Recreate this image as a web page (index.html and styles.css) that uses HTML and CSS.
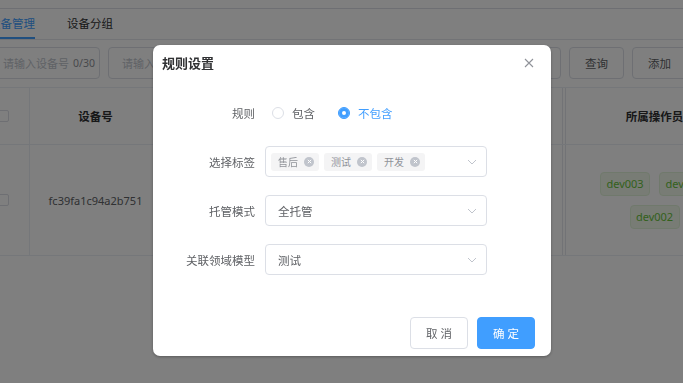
FILE: index.html
```html
<!DOCTYPE html>
<html lang="zh-CN">
<head>
  <meta charset="UTF-8">
  <meta name="viewport" content="width=device-width, initial-scale=1.0">
  <title>设备管理</title>
  <link rel="stylesheet" href="styles.css">
</head>
<body>
  <div class="page">
    <div class="topbar"></div>
    <div class="tabs">
      <div class="tab active">设备管理</div>
      <div class="tab">设备分组</div>
    </div>
    <div class="search">
      <div class="input first"><span>请输入设备号</span><span class="count">0/30</span></div>
      <div class="input second"><span>请输入</span></div>
      <div class="input third"><span>请选择</span></div>
      <button class="btn">查询</button>
      <button class="btn">添加</button>
    </div>
    <div class="table">
      <div class="row head">
        <div class="cell c-check"><span class="checkbox"></span></div>
        <div class="cell c-id">设备号</div>
        <div class="cell c-mid"></div>
        <div class="cell c-ops">所属操作员</div>
      </div>
      <div class="row body">
        <div class="cell c-check"><span class="checkbox"></span></div>
        <div class="cell c-id">fc39fa1c94a2b751</div>
        <div class="cell c-mid"></div>
        <div class="cell c-ops">
          <div class="ops">
            <span class="op">dev003</span>
            <span class="op">dev001</span>
            <span class="op">dev002</span>
          </div>
        </div>
      </div>
    </div>
  </div>

  <div class="mask">
    <div class="dialog">
      <div class="dialog-head">
        <span class="dialog-title">规则设置</span>
        <svg class="close" width="10" height="10" viewBox="0 0 10 10"><path d="M1 1l8 8M9 1l-8 8" stroke="#909399" stroke-width="1.1" fill="none"/></svg>
      </div>
      <div class="dialog-body">
        <div class="form-row">
          <label class="form-label">规则</label>
          <div class="radios">
            <span class="radio"><span class="dot"></span>包含</span>
            <span class="radio checked"><span class="dot"></span>不包含</span>
          </div>
        </div>
        <div class="form-row">
          <label class="form-label">选择标签</label>
          <div class="select">
            <div class="tags">
              <span class="tag">售后<span class="tag-x"><svg width="5" height="5" viewBox="0 0 6 6"><path d="M1 1l4 4M5 1l-4 4" stroke="#fff" stroke-width="1.2"/></svg></span></span>
              <span class="tag">测试<span class="tag-x"><svg width="5" height="5" viewBox="0 0 6 6"><path d="M1 1l4 4M5 1l-4 4" stroke="#fff" stroke-width="1.2"/></svg></span></span>
              <span class="tag">开发<span class="tag-x"><svg width="5" height="5" viewBox="0 0 6 6"><path d="M1 1l4 4M5 1l-4 4" stroke="#fff" stroke-width="1.2"/></svg></span></span>
            </div>
            <svg class="arrow" width="10" height="6" viewBox="0 0 10 6"><path d="M1 1l4 4 4-4" stroke="#c0c4cc" stroke-width="1" fill="none"/></svg>
          </div>
        </div>
        <div class="form-row">
          <label class="form-label">托管模式</label>
          <div class="select">
            <span class="value">全托管</span>
            <svg class="arrow" width="10" height="6" viewBox="0 0 10 6"><path d="M1 1l4 4 4-4" stroke="#c0c4cc" stroke-width="1" fill="none"/></svg>
          </div>
        </div>
        <div class="form-row">
          <label class="form-label">关联领域模型</label>
          <div class="select">
            <span class="value">测试</span>
            <svg class="arrow" width="10" height="6" viewBox="0 0 10 6"><path d="M1 1l4 4 4-4" stroke="#c0c4cc" stroke-width="1" fill="none"/></svg>
          </div>
        </div>
      </div>
      <div class="dialog-foot">
        <button class="dbtn">取 消</button>
        <button class="dbtn primary">确 定</button>
      </div>
    </div>
  </div>
</body>
</html>
```

FILE: styles.css
```css
html, body {
  margin: 0;
  height: 100%;
  overflow: hidden;
}
body {
  background: #fff;
  font-family: "Noto Sans", "Noto Sans CJK SC", sans-serif;
  color: #606266;
}
.page {
  margin-left: -11px;
  width: 800px;
}
.topbar {
  height: 8px;
  border-bottom: 1px solid #dcdfe6;
}
.tabs {
  display: flex;
  gap: 32px;
  height: 30px;
  border-bottom: 1px solid #e4e7ed;
}
.tab {
  font-size: 11.5px;
  line-height: 29px;
  color: #303133;
  border-bottom: 2px solid transparent;
}
.tab.active {
  color: #409eff;
  border-bottom-color: #409eff;
}
.search {
  display: flex;
  gap: 8px;
  margin-top: 7px;
  height: 32px;
}
.input {
  box-sizing: border-box;
  border: 1px solid #dcdfe6;
  border-radius: 4px;
  display: flex;
  align-items: center;
  gap: 4px;
  padding: 0 6px 0 13px;
  font-size: 11px;
  color: #c0c4cc;
  white-space: nowrap;
  overflow: hidden;
}
.input .count { color: #909399; font-size: 10.5px; }
.input.first { width: 111px; }
.input.second { width: 222px; }
.input.third { width: 223px; }
.btn {
  width: 55px;
  border: 1px solid #dcdfe6;
  border-radius: 4px;
  background: #fff;
  font: inherit;
  font-size: 11.5px;
  color: #606266;
  padding: 0;
}
.table {
  margin-top: 8px;
  border-top: 1px solid #ebeef5;
}
.row {
  display: flex;
  border-bottom: 1px solid #ebeef5;
}
.row.head { height: 56px; font-weight: 700; color: #303133; font-size: 11.5px; }
.row.body { height: 110px; font-size: 11px; }
.cell {
  display: flex;
  align-items: center;
  justify-content: center;
  border-right: 1px solid #ebeef5;
  box-sizing: border-box;
}
.c-check { width: 41px; justify-content: flex-start; padding-left: 8px; }
.c-id { width: 132px; }
.c-mid { width: 404px; border-right: 4px double #e4e7ed; }
.c-ops { width: 178px; padding: 0 12px; }
.checkbox {
  width: 12px;
  height: 12px;
  border: 1px solid #dcdfe6;
  border-radius: 2px;
  box-sizing: border-box;
}
.ops {
  display: flex;
  flex-wrap: wrap;
  justify-content: center;
  gap: 9px;
}
.op {
  font-size: 11px;
  color: #67c23a;
  background: #f0f9eb;
  border: 1px solid #e1f3d8;
  border-radius: 4px;
  width: 50px;
  height: 24px;
  box-sizing: border-box;
  display: flex;
  align-items: center;
  justify-content: center;
}

.mask {
  position: fixed;
  inset: 0;
  background: rgba(0, 0, 0, 0.5);
  padding: 45px 0 0 153px;
}
.dialog {
  width: 398px;
  height: 311px;
  background: #fff;
  border-radius: 7px;
  display: flex;
  flex-direction: column;
  box-shadow: 0 1px 3px rgba(0, 0, 0, 0.3);
}
.dialog-head {
  height: 38px;
  display: flex;
  align-items: center;
  justify-content: space-between;
  padding: 0 17px 3px 9px;
  box-sizing: border-box;
}
.dialog-title {
  font-size: 13px;
  font-weight: 700;
  color: #303133;
}
.dialog-body {
  padding-top: 14px;
  flex: 1;
}
.form-row {
  display: flex;
  align-items: center;
  height: 31px;
  margin-bottom: 18px;
}
.form-label {
  width: 112px;
  text-align: right;
  padding-right: 10px;
  box-sizing: border-box;
  font-size: 11.5px;
  color: #606266;
}
.radios {
  display: flex;
  gap: 23px;
  padding-left: 7px;
  font-size: 11.5px;
}
.radio {
  display: flex;
  align-items: center;
  gap: 8px;
  color: #606266;
}
.radio .dot {
  width: 12px;
  height: 12px;
  border: 1px solid #dcdfe6;
  border-radius: 50%;
  box-sizing: border-box;
}
.radio.checked { color: #409eff; }
.radio.checked .dot {
  background: #409eff;
  border-color: #409eff;
  box-shadow: inset 0 0 0 3px #409eff, inset 0 0 0 6px #fff;
}
.select {
  width: 222px;
  height: 31px;
  border: 1px solid #dcdfe6;
  border-radius: 4px;
  box-sizing: border-box;
  display: flex;
  align-items: center;
  justify-content: space-between;
  padding: 0 9px 0 12px;
  font-size: 11.5px;
  color: #606266;
}
.select .tags {
  display: flex;
  gap: 5px;
  margin-left: -7px;
}
.tag {
  display: flex;
  align-items: center;
  gap: 6px;
  height: 18px;
  padding: 0 5px 0 7px;
  background: #f4f4f5;
  border-radius: 3px;
  color: #909399;
  font-size: 10px;
}
.tag-x {
  width: 10px;
  height: 10px;
  border-radius: 50%;
  background: #c0c4cc;
  display: flex;
  align-items: center;
  justify-content: center;
}
.dialog-foot {
  display: flex;
  justify-content: flex-end;
  gap: 9px;
  padding: 0 16px 7px 0;
}
.dbtn {
  width: 58px;
  height: 32px;
  border: 1px solid #dcdfe6;
  border-radius: 4px;
  background: #fff;
  font: inherit;
  font-size: 11.5px;
  color: #606266;
  padding: 0;
}
.dbtn.primary {
  background: #409eff;
  border-color: #409eff;
  color: #fff;
}
```
